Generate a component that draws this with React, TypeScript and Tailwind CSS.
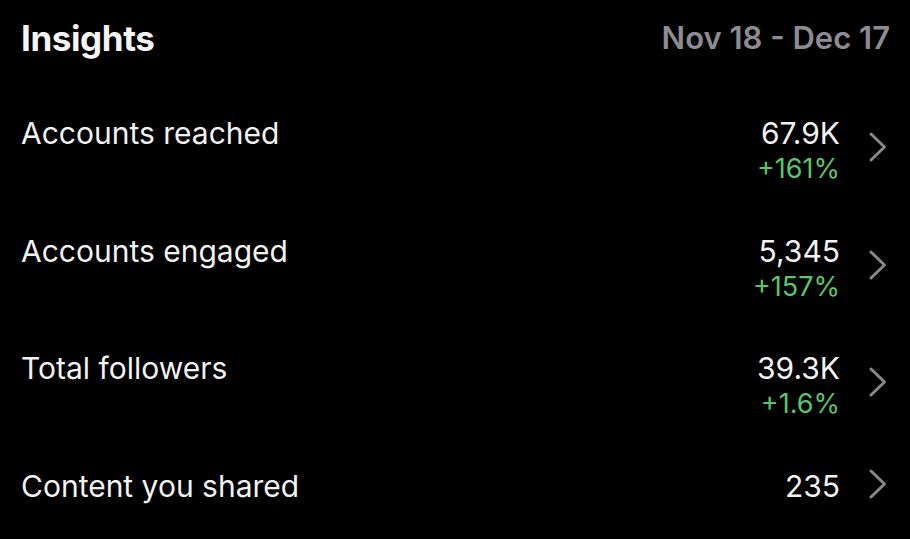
const rows = [
  { label: 'Accounts reached', value: '67.9K', change: '+161%' },
  { label: 'Accounts engaged', value: '5,345', change: '+157%' },
  { label: 'Total followers', value: '39.3K', change: '+1.6%' },
  { label: 'Content you shared', value: '235', change: null },
];

function Chevron({ className }: { className?: string }) {
  return (
    <svg viewBox="0 0 20 32" className={className} fill="none">
      <polyline
        points="3,3 16.5,16 3,29"
        stroke="#88888d"
        strokeWidth={3}
        strokeLinecap="round"
        strokeLinejoin="round"
      />
    </svg>
  );
}

export default function App() {
  return (
    <div
      className="w-[910px] h-[539px] bg-black text-white overflow-hidden pl-[21px] pr-[22px]"
      style={{ fontFamily: 'Inter, "Liberation Sans", sans-serif' }}
    >
      {/* Header */}
      <div className="flex items-center justify-between h-[76px]">
        <h1 className="text-[35px] font-bold tracking-[-0.4px] text-[#f5f5f5]">Insights</h1>
        <span className="text-[31px] font-semibold text-[#8c8c92] mr-[-2px]">Nov 18 - Dec 17</span>
      </div>

      {/* Rows */}
      <div className="flex flex-col pt-[40px]">
        {rows.map((r) => (
          <div key={r.label} className="flex items-start justify-between h-[117.5px]">
            <span className="text-[30px] leading-[34px] text-[#f2f2f2]">{r.label}</span>
            <div className="flex items-start gap-[27px]">
              <div className="flex flex-col items-end mr-[1px]">
                <span className="text-[30px] leading-[34px] text-[#f2f2f2]">{r.value}</span>
                {r.change && (
                  <span className="text-[27px] leading-[34px] mt-[2px] text-[#5ac46c]">{r.change}</span>
                )}
              </div>
              <Chevron className={`w-[20px] h-[32px] ${r.change ? 'mt-[15px]' : 'mt-[-1px]'}`} />
            </div>
          </div>
        ))}
      </div>
    </div>
  );
}
